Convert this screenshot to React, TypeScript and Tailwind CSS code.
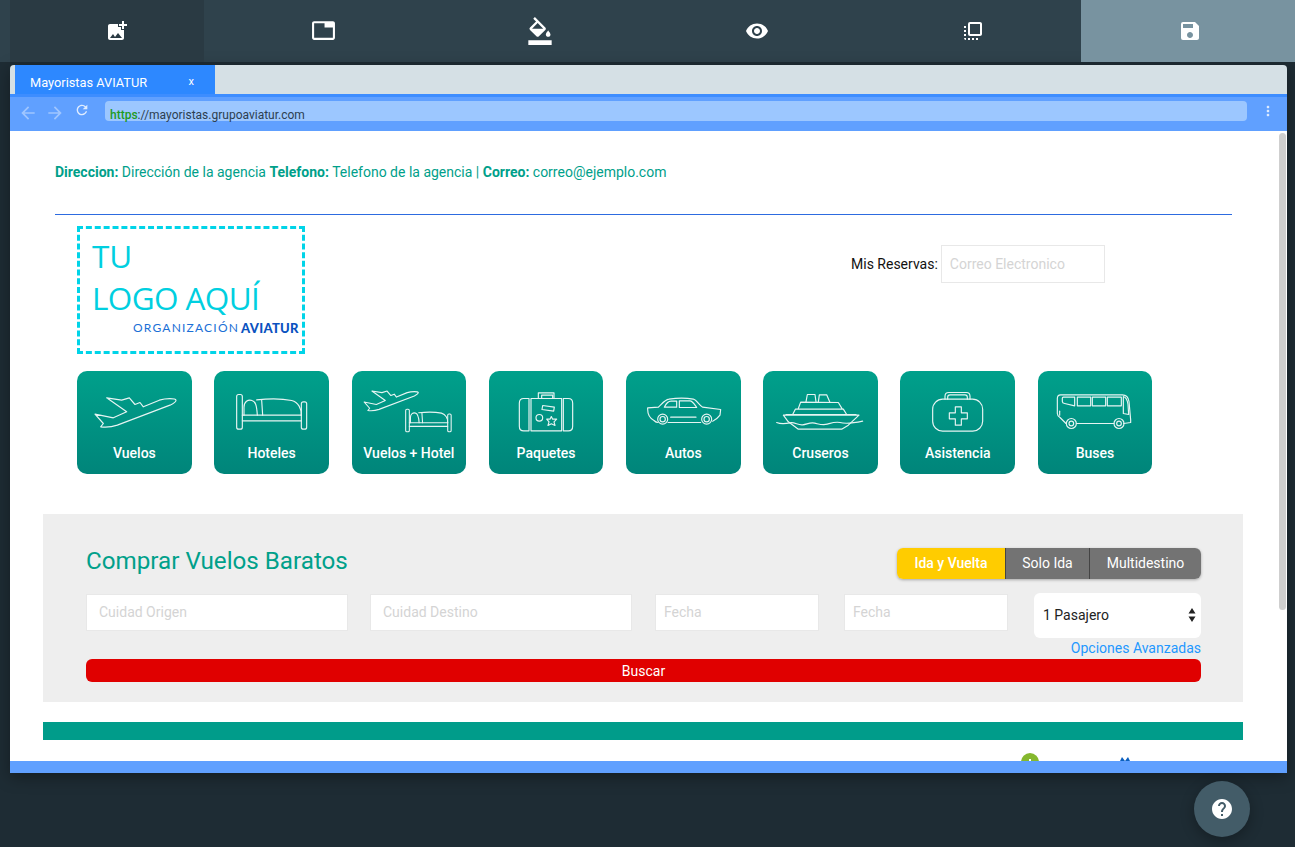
import { MdAddPhotoAlternate, MdArrowBack, MdArrowForward, MdFlipToFront, MdFormatColorFill, MdHelp, MdMoreVert, MdRefresh, MdSave, MdTab, MdVisibility } from "react-icons/md";
import type { ReactNode } from "react";

function Plane() {
  return (
    <path d="M318 105c-2-6-30-6-50 0l-48 20-10-13-15 6-17-20-23 7-45-7 60 42-40 18-55-11 25 28-8 10c15 2 35 0 50-5l158-60c10-5 18-10 18-15z" />
  );
}

function Bed() {
  return (
    <>
      <rect x="500" y="88" width="17" height="104" rx="6" />
      <rect x="694" y="110" width="16" height="82" rx="6" />
      <path d="M517 150h177M517 167h177" />
      <path d="M522 150v-24c0-16 12-24 24-20 10 3 14 12 16 44" />
      <path d="M560 104c40-4 80-3 105 2 20 5 30 25 29 44" />
      <path d="M575 105l3 45" />
    </>
  );
}

const tileIcons: Record<string, ReactNode> = {
  Vuelos: <Plane />,
  Hoteles: <Bed />,
  "Vuelos + Hotel": (
    <>
      <g transform="translate(835 12) scale(0.67)" strokeWidth="5">
        <Plane />
      </g>
      <g transform="translate(685 75) scale(0.65)" strokeWidth="5">
        <Bed />
      </g>
    </>
  ),
  Paquetes: (
    <>
      <rect x="153" y="100" width="92" height="97" />
      <path d="M147 100h-16c-8 0-13 6-13 14v69c0 8 5 14 13 14h16z" />
      <path d="M250 100h15c8 0 13 6 13 14v69c0 8-5 14-13 14h-15z" />
      <path d="M175 100V83h47v17" />
      <rect x="185" y="90" width="33" height="10" />
      <path d="M188 121l35 5-2 12-35-5z" />
      <circle cx="178" cy="158" r="10" />
      <path d="M214 154l4 8 12 0-8 8 3 11-11-5-10 5 3-11-7-8 10 0z" />
    </>
  ),
  Autos: (
    <>
      <path d="M534 172c-3 0-8-2-12-6-12-6-20-20-19-38l32-2c8-6 18-22 32-24 24-4 52-4 73 0 10 2 18 20 28 24l54 7-2 17c-6 8-12 14-22 18M564 172h98" />
      <circle cx="548" cy="162" r="15" />
      <circle cx="548" cy="162" r="8" />
      <circle cx="680" cy="162" r="15" />
      <circle cx="680" cy="162" r="8" />
      <path d="M553 126c4-8 10-18 20-18h17v18zM598 107h32c8 0 14 12 20 20h-52z" />
      <path d="M572 156h76" />
    </>
  ),
  Cruseros: (
    <>
      <path d="M910 150h227l-32 30-20 12H955l-30-22z" />
      <path d="M938 148l8-16h144l10 16M955 130l7-19 113 1 12 20" />
      <path d="M978 110l4-22h23l3 22M1015 110l3-21h22l10 23" />
      <path d="M918 148h210" />
      <path d="M890 172c14 6 26 4 40 1 14-3 24 8 38 6 14-2 22-8 36-5 14 3 24 7 38 3 14-4 24-8 38-5 14 4 30 4 68-4" />
    </>
  ),
  Asistencia: (
    <>
      <rect x="128" y="102" width="150" height="96" rx="30" />
      <path d="M165 102V93c0-7 5-11 11-11h53c7 0 11 4 11 11v9M173 102v-6c0-4 3-7 7-7h45c4 0 7 3 7 7v6" />
      <path d="M196 125h18v18h18v18h-18v19h-18v-19h-18v-18h18z" />
    </>
  ),
  Buses: (
    <>
      <path d="M531 175l-18-18c-5-3-8-5-8-12V100c0-6 4-11 10-11h185c10 0 18 6 20 20l5 55v8l-21 3M562 175h113" />
      <path d="M520 99c0-2 1-3 3-3h34v26l-30-7c-5-1-7-3-7-6z" />
      <rect x="565" y="96" width="40" height="26" />
      <rect x="610" y="96" width="40" height="26" />
      <rect x="655" y="96" width="42" height="26" />
      <path d="M703 94c8 2 12 10 14 24l2 30-16-3z" />
      <circle cx="547" cy="175" r="15" />
      <circle cx="547" cy="175" r="7" />
      <circle cx="690" cy="175" r="15" />
      <circle cx="690" cy="175" r="7" />
      <path d="M512 138v12" />
    </>
  ),
};

const tiles = [
  { label: "Vuelos", x: 21 },
  { label: "Hoteles", x: 432 },
  { label: "Vuelos + Hotel", x: 846 },
  { label: "Paquetes", x: 27 },
  { label: "Autos", x: 438 },
  { label: "Cruseros", x: 849 },
  { label: "Asistencia", x: 30 },
  { label: "Buses", x: 444 },
];

function Field({ placeholder, width, padding }: { placeholder: string; width: string; padding: string }) {
  return (
    <input
      placeholder={placeholder}
      className={`${width} ${padding} h-[37px] shrink-0 border border-[#e8e8e8] bg-white pb-[2px] text-sm text-[#333] outline-none placeholder:text-[#d4d4d4]`}
    />
  );
}

export default function App() {
  return (
    <div className="relative h-[847px] w-[1295px] overflow-hidden bg-[#1e2c34] font-['Roboto',sans-serif]">
      <header className="flex h-[62px] bg-[#2f424c] text-white">
        <div className="ml-[10px] flex w-[194px] items-center justify-center bg-[#2a3a43] pb-[1px] pl-[20px]">
          <MdAddPhotoAlternate size={24} />
        </div>
        <div className="flex w-[227px] items-center justify-center pb-[1px] pl-[12px]">
          <MdTab size={25} />
        </div>
        <div className="flex w-[217px] items-center justify-center pb-[1px]">
          <MdFormatColorFill size={28} />
        </div>
        <div className="flex w-[217px] items-center justify-center pb-[1px]">
          <MdVisibility size={24} />
        </div>
        <div className="flex w-[216px] items-center justify-center pb-[1px]">
          <MdFlipToFront size={24} />
        </div>
        <div className="flex w-[214px] items-center justify-center bg-[#7893a0] pb-[1px] pl-[4px]">
          <MdSave size={24} />
        </div>
      </header>

      <div className="mx-[10px] mt-[3px] flex h-[708px] w-[1277px] flex-col overflow-hidden rounded-t-sm shadow-[0_4px_16px_rgba(0,0,0,0.35)]">
        <div className="flex h-[29px] bg-[#d5e0e5] pl-[5px]">
          <div className="flex w-[200px] items-center justify-between bg-[#2d88ff] pl-[15px] pr-[21px] pt-[6px] text-[12.8px] text-white">
            <span>Mayoristas AVIATUR</span>
            <span className="text-[11px]">x</span>
          </div>
        </div>
        <div className="h-[3px] bg-[#3d8dff]" />
        <div className="flex h-[34px] bg-[#60a0ff] pt-[4px]">
          <div className="flex w-[95px] items-start pl-[8px] text-white/40">
            <MdArrowBack size={20} className="mt-[2px]" />
            <MdArrowForward size={20} className="ml-[7px] mt-[2px]" />
            <MdRefresh size={16} className="ml-[9px] mt-[1px] text-white/80" />
          </div>
          <div className="flex h-[20px] w-[1142px] items-end rounded-sm bg-[#9cc7ff] pl-[5px] text-xs leading-[11px] text-[#2c3e50]">
            <span className="font-medium text-[#1f9a1f]">https</span>
            <span>://mayoristas.grupoaviatur.com</span>
          </div>
          <MdMoreVert size={16} className="ml-[13px] mt-[2px] text-white/80" />
        </div>

        <main className="relative h-[630px] overflow-hidden bg-white">
          <div className="absolute right-[1px] top-[2px] h-[477px] w-[7px] rounded bg-[#cfcfcf]" />

          <p className="ml-[45px] pt-[32px] text-sm leading-[18px] text-[#00a08a]">
            <b className="font-bold">Direccion:</b> Dirección de la agencia <b className="font-bold">Telefono:</b> Telefono de la agencia | <b className="font-bold">Correo:</b> correo@ejemplo.com
          </p>
          <div className="ml-[45px] mt-[33px] h-px w-[1177px] bg-[#2d6be0]" />

          <div className="mt-[11px] flex">
            <div className="ml-[67px] h-[128px] w-[228px] border-[3px] border-dashed border-[#00d4e8] pl-[12px] font-['Open_Sans',sans-serif] text-[#00cfe0]">
              <div className="mt-[6px] text-[31.5px] font-normal leading-[42px]">TU</div>
              <div className="text-[31.5px] font-normal leading-[42px] tracking-[-0.6px]">LOGO AQUÍ</div>
              <div className="ml-[41px] mt-[2px] flex whitespace-nowrap font-['Lato',sans-serif] text-[12px] leading-[14px] text-[#1a6fd6]">
                <span className="tracking-[1.2px]">ORGANIZACIÓN</span>
                <span className="ml-[2px] text-[13px] font-black tracking-[0.3px] text-[#0a52c0]">AVIATUR</span>
              </div>
            </div>
            <div className="ml-[546px] mt-[19px] flex h-[38px] items-center text-sm text-[#111]">
              <span className="mr-[3px]">Mis Reservas:</span>
              <input
                placeholder="Correo Electronico"
                className="h-[38px] w-[164px] border border-[#e8e8e8] bg-white px-2 text-sm outline-none placeholder:text-[#d4d4d4]"
              />
            </div>
          </div>

          <nav className="ml-[67.12px] mt-[17px] flex w-[1075.15px] justify-between">
            {tiles.map((tile) => (
              <a
                key={tile.label}
                className="flex h-[103px] w-[114.6px] flex-col items-center rounded-[10px] bg-gradient-to-b from-[#00a08b] to-[#00857a] text-sm font-medium text-white"
              >
                <svg
                  viewBox={`${tile.x} 18 345 200`}
                  width={115}
                  height={67}
                  fill="none"
                  stroke="#fff"
                  strokeWidth="3.5"
                  strokeLinejoin="round"
                  strokeLinecap="round"
                  className="opacity-90"
                >
                  {tileIcons[tile.label]}
                </svg>
                <span className="mt-[6px] leading-[18px]">{tile.label}</span>
              </a>
            ))}
          </nav>

          <section className="ml-[33px] mt-[40px] h-[188px] w-[1200px] bg-[#eeeeee] pl-[43px] pr-[42px] pt-[34px]">
            <div className="flex items-start justify-between">
              <h2 className="mt-[-5px] text-[24.2px] font-normal leading-[36px] text-[#00a08a]">Comprar Vuelos Baratos</h2>
              <div className="flex h-[31px] overflow-hidden rounded-md text-sm shadow-[0_1px_3px_rgba(0,0,0,0.3)]">
                <span className="flex w-[108px] items-center justify-center bg-[#ffcc00] pb-[1px] font-medium text-white">Ida y Vuelta</span>
                <span className="flex w-[84px] items-center justify-center border-l border-[#444] bg-[#737373] pb-[1px] text-white">Solo Ida</span>
                <span className="flex w-[112px] items-center justify-center border-l border-[#444] bg-[#737373] pb-[1px] text-white">Multidestino</span>
              </div>
            </div>
            <div className="mt-[15px] flex items-start">
              <Field placeholder="Cuidad Origen" width="w-[262px]" padding="px-[12px]" />
              <div className="w-[22px] shrink-0" />
              <Field placeholder="Cuidad Destino" width="w-[262px]" padding="px-[12px]" />
              <div className="w-[23px] shrink-0" />
              <Field placeholder="Fecha" width="w-[164px]" padding="px-[8px]" />
              <div className="w-[25px] shrink-0" />
              <Field placeholder="Fecha" width="w-[164px]" padding="px-[8px]" />
              <div className="ml-[26px] mt-[-1px] flex h-[45px] w-[167px] shrink-0 items-center justify-between rounded-md bg-white pb-[2px] pl-[9px] pr-[5px] text-sm text-[#222]">
                <span>1 Pasajero</span>
                <svg viewBox="0 0 8 14" width="8" height="14" fill="#222">
                  <path d="M4 0l3.5 5.5h-7zM4 14l-3.5-5.5h7z" />
                </svg>
              </div>
            </div>
            <div className="mt-[1px] h-[19px] text-right text-sm leading-[19px] text-[#1e98ff]">Opciones Avanzadas</div>
            <div className="mt-[1px] flex h-[23px] items-center justify-center rounded-md bg-[#e00000] text-sm text-white">Buscar</div>
          </section>

          <div className="ml-[33px] mt-[20px] h-[18px] w-[1200px] bg-[#009c8a]" />

          <div className="relative mt-[13px] h-[20px]">
            <div className="absolute left-[1011px] top-0 flex h-[18px] w-[18px] justify-center rounded-full bg-[#85b82e] pt-[6px]">
              <span className="h-[3px] w-[2px] bg-white" />
            </div>
            <svg viewBox="0 0 14 8" width="14" height="8" className="absolute left-[1108px] top-[4px]" fill="#0a5fc0">
              <path d="M0 8l4-8 3 4 3-4 4 8z" />
            </svg>
          </div>
        </main>

        <div className="h-[12px] shrink-0 bg-[#60a0ff]" />
      </div>

      <button className="absolute left-[1194px] top-[781px] flex h-[56px] w-[56px] items-center justify-center rounded-full bg-[#435c68] text-white shadow-[0_4px_14px_rgba(0,0,0,0.3)]">
        <MdHelp size={24} />
      </button>
    </div>
  );
}
